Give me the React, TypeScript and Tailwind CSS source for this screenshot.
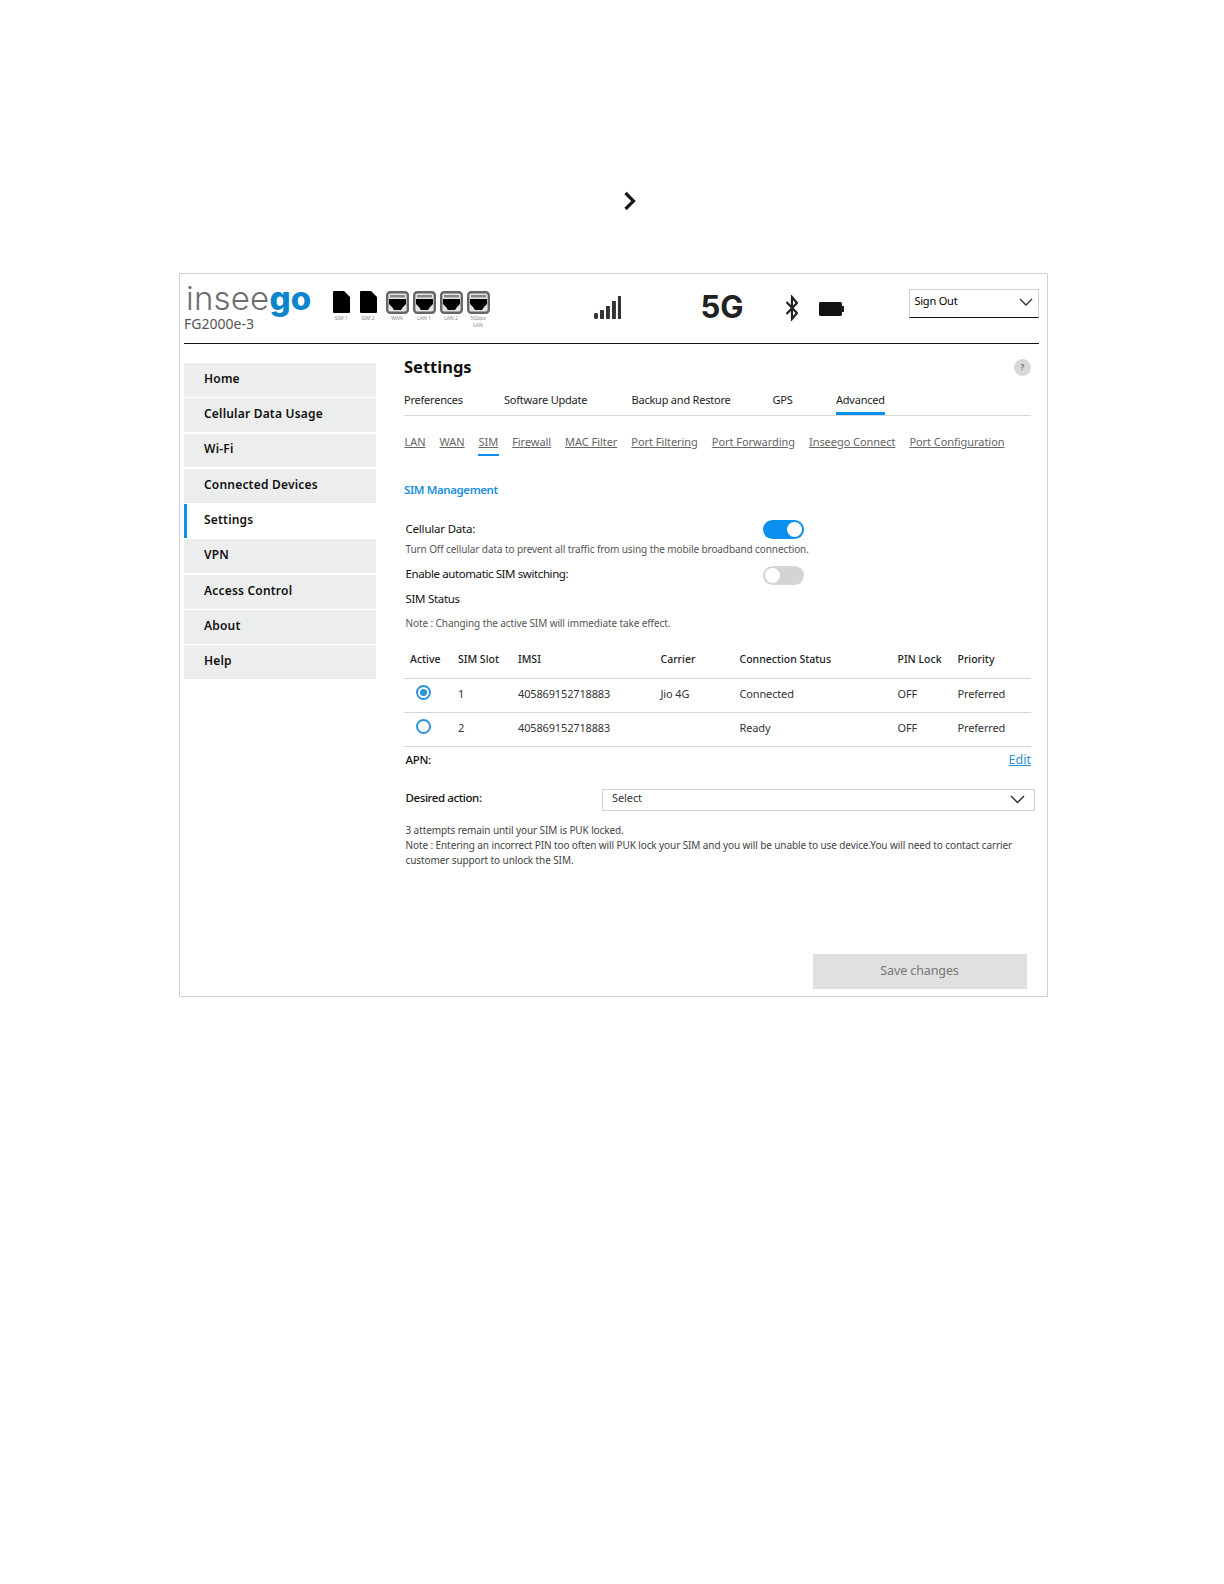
import React from "react";

const font = { fontFamily: '"Noto Sans", sans-serif' };

const navItems = ["Home", "Cellular Data Usage", "Wi-Fi", "Connected Devices", "Settings", "VPN", "Access Control", "About", "Help"];
const tabs = [
  { label: "Preferences", w: "w-[100px]" },
  { label: "Software Update", w: "w-[127.5px]" },
  { label: "Backup and Restore", w: "w-[141px]" },
  { label: "GPS", w: "w-[63.5px]" },
];
const subTabs = ["LAN", "WAN", "SIM", "Firewall", "MAC Filter", "Port Filtering", "Port Forwarding", "Inseego Connect", "Port Configuration"];

function SimIcon({ label }: { label: string }) {
  return (
    <div className="flex w-[27px] flex-col items-center">
      <svg width="17" height="22" viewBox="0 0 17 22">
        <path d="M1 0h10l6 6v15a1 1 0 0 1-1 1H1a1 1 0 0 1-1-1V1a1 1 0 0 1 1-1z" fill="#000" />
      </svg>
      <span className="mt-[2px] text-[5px] leading-[6px] text-[#888]">{label}</span>
    </div>
  );
}

function PortIcon({ label }: { label: string }) {
  return (
    <div className="flex w-[27px] flex-col items-center">
      <svg width="23" height="23" viewBox="0 0 23 23">
        <rect x="1.2" y="1.2" width="20.6" height="20.6" rx="3" fill="#e4e4e4" stroke="#666" strokeWidth="2.4" />
        <rect x="4" y="4" width="15" height="2.5" fill="#888" />
        <path d="M3 8h17v5l-3 3-2 3H8l-2-3-3-3z" fill="#000" />
      </svg>
      <span className="mt-[1px] w-[20px] text-center text-[5px] leading-[7px] text-[#888]">{label}</span>
    </div>
  );
}

function Toggle({ on }: { on: boolean }) {
  return (
    <div className={`flex h-[19px] w-[41px] items-center rounded-full px-[2px] ${on ? "justify-end bg-[#0a8fef]" : "justify-start bg-[#d4d4d4]"}`}>
      <div className="h-[15px] w-[15px] rounded-full bg-white" />
    </div>
  );
}

function Row({ slot, carrier, status, active }: { slot: string; carrier: string; status: string; active: boolean }) {
  return (
    <div className="grid h-[34px] grid-cols-[48px_60px_142.5px_79px_158px_60px_1fr] items-center border-b border-[#d6d6d6] pb-[3px] pl-[6px] text-[11px] tracking-[-0.15px] text-[#333]">
      <div className="-mt-[4px] flex pl-[6px]">
        <div className="flex h-[15px] w-[15px] items-center justify-center rounded-full border-2 border-[#2a94dc]">
          {active && <div className="h-[7px] w-[7px] rounded-full bg-[#2a94dc]" />}
        </div>
      </div>
      <div>{slot}</div>
      <div>405869152718883</div>
      <div>{carrier}</div>
      <div>{status}</div>
      <div>OFF</div>
      <div>Preferred</div>
    </div>
  );
}

export default function App() {
  return (
    <div className="min-h-[1584px] bg-white pt-[191px] text-black" style={font}>
      {/* Chevron above the screenshot */}
      <div className="flex justify-center pl-[36px]">
        <svg width="14" height="20" viewBox="0 0 14 20">
          <path d="M2.5 2l8 8-8 8" fill="none" stroke="#1a1a1a" strokeWidth="3.2" />
        </svg>
      </div>

      <div className="ml-[179px] mt-[62px] h-[724px] w-[869px] border border-[#cfcfcf] px-[4px]">
        {/* Header */}
        <div className="flex h-[70px] w-[855px] border-b-[1.5px] border-[#111]">
          <div className="w-[144px]">
            <div className="mt-[7px] flex h-[34px] pl-[2px] text-[33px] leading-[34px] tracking-[0.2px] text-[#6d6e71]" style={{ fontFamily: '"Inter", sans-serif', fontWeight: 300 }}>
              <span className="block h-[34px]">insee</span>
              <span className="block h-[34px] font-extrabold text-[#0b85cc]">go</span>
            </div>
            <div className="text-[14px] leading-[18px] text-[#555]">FG2000e-3</div>
          </div>
          <div className="mt-[17px] flex items-start">
            <SimIcon label="SIM 1" />
            <SimIcon label="SIM 2" />
            <div className="w-[2px]" />
            <PortIcon label="WAN" />
            <PortIcon label="LAN 1" />
            <PortIcon label="LAN 2" />
            <PortIcon label={"5Gbps LAN"} />
          </div>
          <svg className="ml-[102px] mt-[21px]" width="28" height="24" viewBox="0 0 28 24" fill="#333">
            <rect x="0" y="18" width="4" height="6" rx="1.5" />
            <rect x="6" y="15" width="4" height="9" />
            <rect x="12" y="11" width="4" height="13" />
            <rect x="18" y="6" width="4" height="18" />
            <rect x="24" y="1" width="4" height="23" />
          </svg>
          <div className="ml-[79px] mt-[13px] text-[31px] font-bold leading-[40px] text-[#222]" style={{ fontFamily: '"Inter", sans-serif' }}>5G</div>
          <svg className="ml-[41px] mt-[21px]" width="14" height="26" viewBox="0 0 14 26">
            <path d="M1.5 7l10.5 11-5 6V2l5 6L1.5 19" fill="none" stroke="#222" strokeWidth="2.2" />
          </svg>
          <svg className="ml-[21px] mt-[28px]" width="25" height="14" viewBox="0 0 25 14">
            <rect x="0" y="0" width="23" height="14" rx="1.5" fill="#111" />
            <rect x="23" y="4" width="2" height="6" fill="#111" />
          </svg>
          <div className="ml-[65px] mt-[15px] flex h-[29px] w-[130px] items-center justify-between border border-b-[1.5px] border-[#cfcfcf] border-b-[#111] pl-[4px] pr-[5px] text-[11px] leading-none tracking-[-0.2px]">
            <span className="-mt-[6px]">Sign Out</span>
            <svg width="14" height="9" viewBox="0 0 14 9" className="-mt-[3px]">
              <path d="M1 1l6 6 6-6" fill="none" stroke="#333" strokeWidth="1.4" />
            </svg>
          </div>
        </div>

        <div className="flex">
          {/* Sidebar */}
          <div className="mt-[19px] flex w-[192px] flex-col gap-[1.5px]">
            {navItems.map((item) =>
              item === "Settings" ? (
                <div key={item} className="flex h-[33.8px] items-center border-l-[3px] border-[#0a8fef] bg-white pb-[2px] pl-[17px] text-[12px] font-semibold tracking-[0.2px] text-[#111]">
                  {item}
                </div>
              ) : (
                <div key={item} className="flex h-[33.8px] items-center bg-[#eceded] pb-[2px] pl-[20px] text-[12px] font-semibold tracking-[0.2px] text-[#111]">
                  {item}
                </div>
              )
            )}
          </div>

          {/* Content */}
          <div className="ml-[28px] w-[631px]">
            <div className="flex w-[627px] items-center justify-between pt-[11px]">
              <h1 className="text-[16.5px] font-bold leading-[24px] text-[#111]">Settings</h1>
              <div className="flex h-[17px] w-[17px] items-center justify-center rounded-full bg-[#d8d8d8] text-[8px] font-bold text-[#777]">?</div>
            </div>

            <div className="mt-[10px] flex h-[27px] w-[627px] items-start border-b border-[#d8d8d8] text-[11px] leading-[22px] tracking-[-0.22px] text-[#222]">
              {tabs.map((t) => (
                <div key={t.label} className={t.w}>{t.label}</div>
              ))}
              <div className="h-[26px] w-fit border-b-[3px] border-[#0a8fef]">Advanced</div>
            </div>

            <div className="mt-[14px] flex gap-[14px] pl-[0.5px] text-[11px] leading-[24px] tracking-[-0.05px] text-[#666]">
              {subTabs.map((s) =>
                s === "SIM" ? (
                  <div key={s} className="relative underline">
                    {s}
                    <div className="absolute bottom-[-2px] left-[-1px] right-[-1px] h-[2.5px] bg-[#0a8fef]" />
                  </div>
                ) : (
                  <div key={s} className="underline">{s}</div>
                )
              )}
            </div>

            <div className="mt-[25px] text-[11.5px] font-semibold leading-[22px] tracking-[-0.4px] text-[#1a8fe3]">SIM Management</div>

            <div className="mt-[18px] flex h-[21px] w-[399.5px] items-center justify-between pl-[1.5px] text-[11.5px] leading-[18px] tracking-[-0.2px] text-[#111]">
              <span className="-mt-[2px]">Cellular Data:</span>
              <Toggle on />
            </div>
            <div className="mt-[1px] pl-[1.5px] text-[10px] leading-[16px] tracking-[-0.1px] text-[#555]">
              Turn Off cellular data to prevent all traffic from using the mobile broadband connection.
            </div>
            <div className="mt-[8px] flex h-[21px] w-[399.5px] items-center justify-between pl-[1.5px] text-[11.5px] leading-[18px] tracking-[-0.4px] text-[#111]">
              <span className="-mt-[4px]">Enable automatic SIM switching:</span>
              <Toggle on={false} />
            </div>
            <div className="mt-[4px] pl-[1.5px] text-[11.5px] leading-[18px] tracking-[-0.3px] text-[#111]">SIM Status</div>
            <div className="mt-[7px] pl-[1.5px] text-[10px] leading-[16px] tracking-[-0.1px] text-[#555]">Note : Changing the active SIM will immediate take effect.</div>

            {/* SIM table */}
            <div className="mt-[10px] w-[627px]">
              <div className="grid h-[38px] grid-cols-[48px_60px_142.5px_79px_158px_60px_1fr] items-center border-b border-[#d6d6d6] pl-[6px] text-[10.5px] font-medium text-[#222]">
                <div>Active</div>
                <div>SIM Slot</div>
                <div>IMSI</div>
                <div>Carrier</div>
                <div>Connection Status</div>
                <div>PIN Lock</div>
                <div>Priority</div>
              </div>
              <Row slot="1" carrier="Jio 4G" status="Connected" active />
              <Row slot="2" carrier="" status="Ready" active={false} />
            </div>

            <div className="mt-[2px] flex w-[627px] items-center justify-between pl-[1.5px] leading-[22px]">
              <span className="text-[11.5px] font-medium tracking-[-0.3px] text-[#111]">APN:</span>
              <span className="text-[12.5px] text-[#2a94dc] underline">Edit</span>
            </div>

            <div className="mt-[14.5px] flex items-center pl-[1.5px]">
              <span className="w-[196.5px] text-[11.5px] font-medium tracking-[-0.4px] text-[#111]">Desired action:</span>
              <div className="mt-[3px] flex h-[22px] w-[433px] items-center justify-between border border-[#cfcfcf] pl-[9px] pr-[9px] text-[11px] tracking-[-0.1px] text-[#333]">
                <span className="-mt-[2px]">Select</span>
                <svg width="15" height="9" viewBox="0 0 15 9">
                  <path d="M1 1l6.5 6.5L14 1" fill="none" stroke="#333" strokeWidth="1.5" />
                </svg>
              </div>
            </div>

            <div className="mt-[12px] w-[627px] pl-[1.5px] text-[10px] leading-[15.2px] tracking-[-0.1px] text-[#444]">
              <div>3 attempts remain until your SIM is PUK locked.</div>
              <div>Note : Entering an incorrect PIN too often will PUK lock your SIM and you will be unable to use device.You will need to contact carrier customer support to unlock the SIM.</div>
            </div>

            <div className="ml-[408.5px] mt-[85.5px] flex h-[35px] w-[214px] items-center justify-center bg-[#e0e0e0] text-[12.5px] tracking-[-0.1px] text-[#777]">
              Save changes
            </div>
          </div>
        </div>
      </div>
    </div>
  );
}
